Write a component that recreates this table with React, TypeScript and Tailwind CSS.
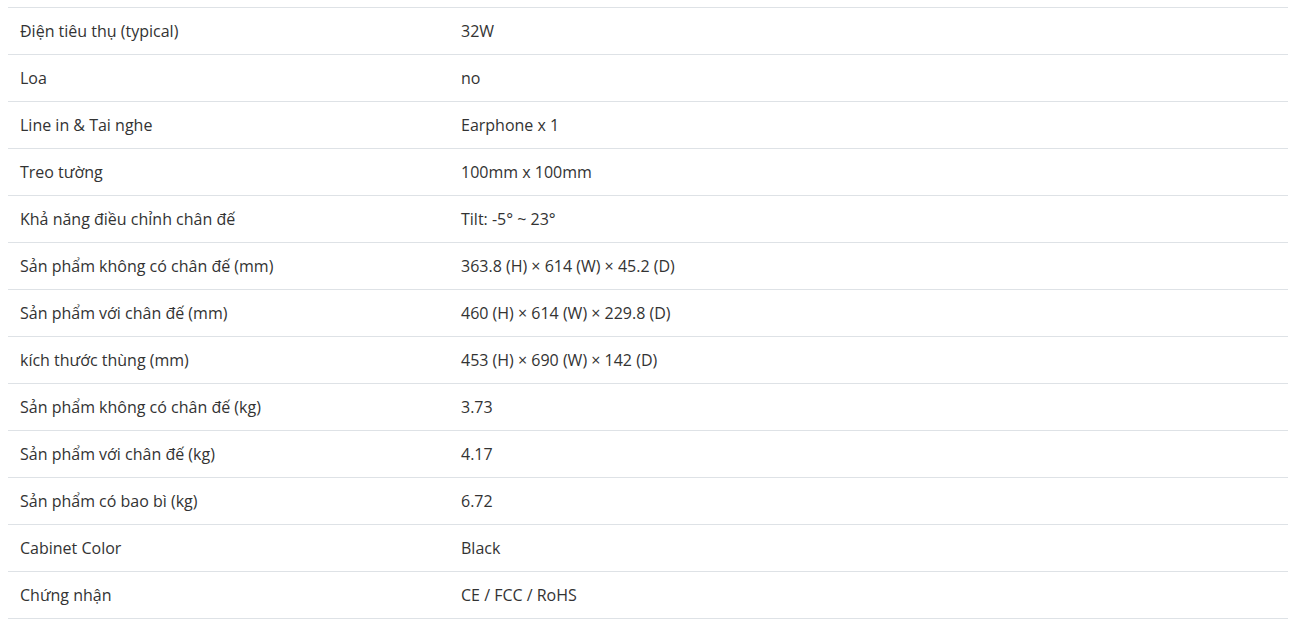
const specs: [string, string][] = [
  ["Điện tiêu thụ (typical)", "32W"],
  ["Loa", "no"],
  ["Line in & Tai nghe", "Earphone x 1"],
  ["Treo tường", "100mm x 100mm"],
  ["Khả năng điều chỉnh chân đế", "Tilt: -5° ~ 23°"],
  ["Sản phẩm không có chân đế (mm)", "363.8 (H) × 614 (W) × 45.2 (D)"],
  ["Sản phẩm với chân đế (mm)", "460 (H) × 614 (W) × 229.8 (D)"],
  ["kích thước thùng (mm)", "453 (H) × 690 (W) × 142 (D)"],
  ["Sản phẩm không có chân đế (kg)", "3.73"],
  ["Sản phẩm với chân đế (kg)", "4.17"],
  ["Sản phẩm có bao bì (kg)", "6.72"],
  ["Cabinet Color", "Black"],
  ["Chứng nhận", "CE / FCC / RoHS"],
];

export default function App() {
  return (
    <div className="min-h-screen bg-white pt-[7px] pl-2 pr-[27px] font-['Open_Sans',sans-serif] text-[16px] leading-[22px] text-[#333333]">
      <table className="w-full border-collapse border-b border-[#dee2e6]">
        <tbody>
          {specs.map(([label, value]) => (
            <tr key={label}>
              <td className="w-[441px] border-t border-[#dee2e6] px-3 py-3 align-top">{label}</td>
              <td className="border-t border-[#dee2e6] px-3 py-3 align-top">{value}</td>
            </tr>
          ))}
        </tbody>
      </table>
    </div>
  );
}
